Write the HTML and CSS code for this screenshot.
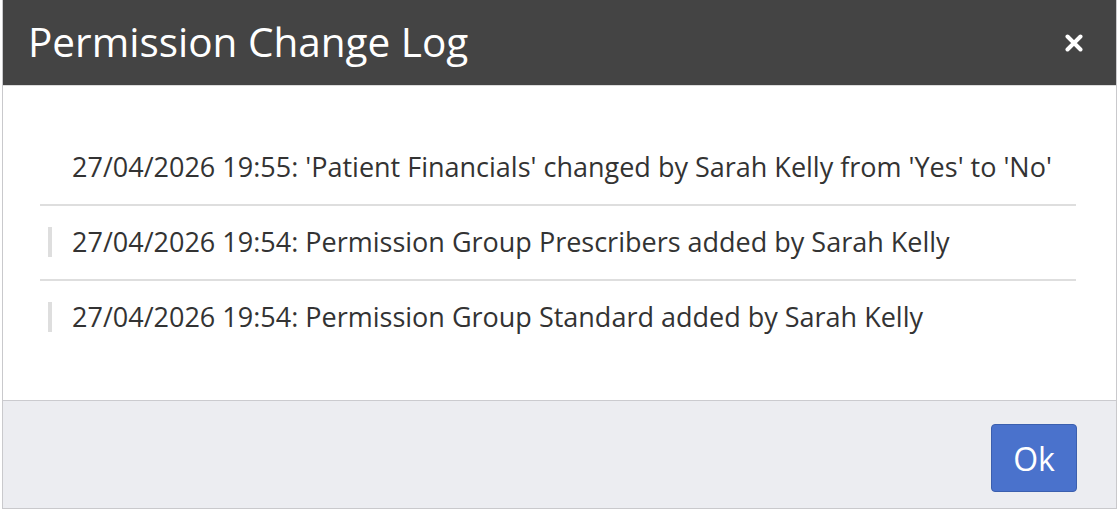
FILE: index.html
```html
<!DOCTYPE html>
<html>
<head>
<meta charset="utf-8">
<link rel="stylesheet" href="styles.css">
</head>
<body>
<div class="modal">
  <div class="modal-header">
    <h1 class="modal-title">Permission Change Log</h1>
    <button class="close" aria-label="Close">
      <svg width="18" height="18" viewBox="0 0 18 18"><path d="M2.5 2.5 L15.5 15.5 M15.5 2.5 L2.5 15.5" stroke="#fff" stroke-width="4" stroke-linecap="round"/></svg>
    </button>
  </div>
  <div class="modal-body">
    <ul class="log">
      <li class="log-item first"><div class="entry">27/04/2026 19:55: 'Patient Financials' changed by Sarah Kelly from 'Yes' to 'No'</div></li>
      <li class="log-item"><div class="entry">27/04/2026 19:54: Permission Group Prescribers added by Sarah Kelly</div></li>
      <li class="log-item"><div class="entry">27/04/2026 19:54: Permission Group Standard added by Sarah Kelly</div></li>
    </ul>
  </div>
  <div class="modal-footer">
    <button class="btn-ok">Ok</button>
  </div>
</div>
</body>
</html>
```
FILE: styles.css
```css
html, body {
  margin: 0;
  padding: 0;
  background: #ffffff;
}
body {
  font-family: "Open Sans", "Liberation Sans", sans-serif;
  width: 1119px;
  height: 511px;
  overflow: hidden;
}
.modal {
  margin-left: 2px;
  width: 1113px;
  border: 1px solid #c9c9cc;
  border-top: none;
  background: #fff;
}
.modal-header {
  height: 85px;
  background: #444444;
  border-bottom: 1px solid #dcdcdc;
  display: flex;
  align-items: center;
  justify-content: space-between;
  padding: 0 33px 0 25px;
}
.modal-title {
  margin: 0;
  color: #fff;
  font-weight: 400;
  font-size: 40.5px;
  line-height: 1;
}
.close {
  background: none;
  border: none;
  padding: 0;
  width: 18px;
  height: 18px;
  display: flex;
  cursor: pointer;
}
.modal-body {
  height: 314px;
  padding: 45px 40px 0 37px;
  box-sizing: border-box;
}
.log {
  list-style: none;
  margin: 0;
  padding: 0;
}
.log-item {
  padding: 21px 0 22px;
  border-bottom: 2px solid #dedede;
}
.log-item:last-child {
  border-bottom: none;
}
.entry {
  margin-left: 8px;
  border-left: 4px solid #dedede;
  padding-left: 20px;
  font-size: 27px;
  line-height: 30px;
  color: #333;
}
.first .entry {
  border-left-color: transparent;
}
.modal-footer {
  border-top: 1px solid #cbcbcf;
  background: #ecedf1;
  padding: 23px 39px 16px;
  display: flex;
  justify-content: flex-end;
}
.btn-ok {
  width: 86px;
  height: 68px;
  background: #4a72cc;
  border: 1px solid #3b5fae;
  border-radius: 4px;
  color: #fff;
  font-family: "Open Sans", "Liberation Sans", sans-serif;
  font-size: 32px;
  padding: 0;
}
```
